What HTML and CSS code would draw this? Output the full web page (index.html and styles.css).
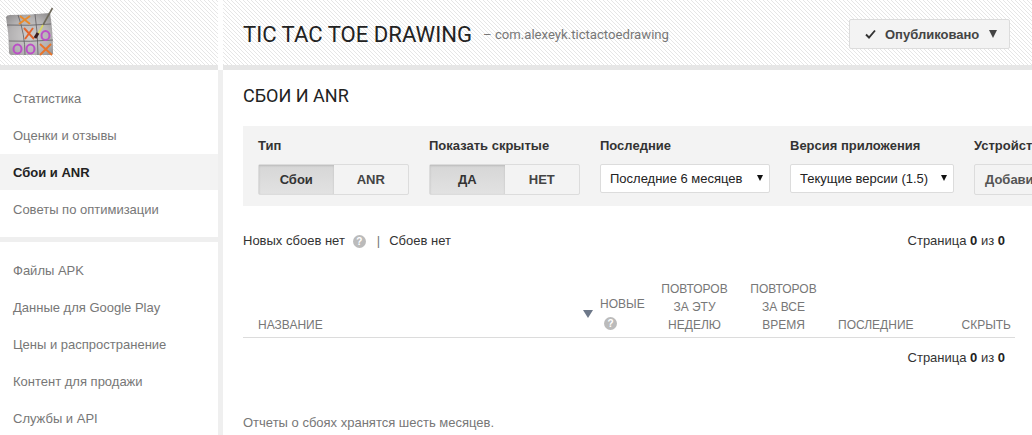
FILE: index.html
```html
<!DOCTYPE html>
<html lang="ru">
<head>
<meta charset="utf-8">
<title>Сбои и ANR</title>
<link rel="stylesheet" href="styles.css">
</head>
<body>
<div class="page">
  <aside class="side">
    <div class="logo-bar stripes">
      <svg class="logo" width="54" height="57" viewBox="0 0 54 57">
        <defs>
          <radialGradient id="tile" cx=".5" cy=".55" r=".7">
            <stop offset="0" stop-color="#cfcdcd"/>
            <stop offset=".6" stop-color="#b4b2b3"/>
            <stop offset="1" stop-color="#8c8a8b"/>
          </radialGradient>
          <filter id="soft" x="-5%" y="-5%" width="110%" height="110%"><feGaussianBlur stdDeviation=".3"/></filter>
        </defs>
        <g filter="url(#soft)">
          <path d="M6 17 Q7 15 10 15 Q30 15 50 13 Q53 30 53 53 Q53 55 50 55 L12 55 Q9 55 9 52 Q9 34 6 17Z" fill="url(#tile)"/>
          <g fill="none" stroke="#5f5d61" stroke-width=".8">
            <path d="M7 25 Q30 26 51 24"/>
            <path d="M9 41 Q30 42 53 40"/>
            <path d="M18 15 Q25 34 25 55"/>
            <path d="M35 14 Q38 34 38 55"/>
          </g>
          <g fill="none" stroke-width="1.9">
            <path d="M20 16 L30 24M30 16 L19 24" stroke="#e98a2c"/>
            <path d="M24 28 L34 39M33 28 L25 39" stroke="#e3642a"/>
            <path d="M40 44 L52 55M51 44 L40 55" stroke="#e8742b"/>
          </g>
          <g fill="none" stroke="#bb4fc6" stroke-width="2">
            <ellipse cx="45.500" cy="35.500" rx="4" ry="4.500"/>
            <ellipse cx="17.500" cy="49" rx="4" ry="4.500"/>
            <ellipse cx="30.500" cy="49" rx="4" ry="4.500"/>
          </g>
          <path d="M52.500 8 L43 25" stroke="#6e6a5c" stroke-width="1.600"/>
          <path d="M43 25 L38 34" stroke="#d8d860" stroke-width="1.600"/>
          <path d="M38 33 L35 38" stroke="#3a1c1c" stroke-width="3"/>
        </g>
      </svg>
    </div>
    <nav class="nav-group">
      <a class="nav-item">Статистика</a>
      <a class="nav-item">Оценки и отзывы</a>
      <a class="nav-item active">Сбои и ANR</a>
      <a class="nav-item">Советы по оптимизации</a>
    </nav>
    <nav class="nav-group">
      <a class="nav-item">Файлы APK</a>
      <a class="nav-item">Данные для Google Play</a>
      <a class="nav-item">Цены и распространение</a>
      <a class="nav-item">Контент для продажи</a>
      <a class="nav-item">Службы и API</a>
    </nav>
  </aside>
  <main class="main">
    <header class="top stripes">
      <h1 class="app-name">TIC TAC TOE DRAWING</h1>
      <span class="package">– com.alexeyk.tictactoedrawing</span>
      <button class="publish">
        <svg class="check" width="11" height="10" viewBox="0 0 11 10"><path d="M1 5.500 L4 8.500 L10 1.500" fill="none" stroke="#333" stroke-width="1.900"/></svg>
        <span>Опубликовано</span>
        <span class="caret"></span>
      </button>
    </header>
    <section class="content">
      <h2 class="page-title">СБОИ И ANR</h2>
      <div class="filters">
        <div class="filter">
          <div class="label">Тип</div>
          <div class="toggle">
            <span class="seg on">Сбои</span><span class="seg">ANR</span>
          </div>
        </div>
        <div class="filter">
          <div class="label">Показать скрытые</div>
          <div class="toggle low">
            <span class="seg on">ДА</span><span class="seg">НЕТ</span>
          </div>
        </div>
        <div class="filter">
          <div class="label">Последние</div>
          <div class="select w170">Последние 6 месяцев<span class="sel-caret"></span></div>
        </div>
        <div class="filter">
          <div class="label">Версия приложения</div>
          <div class="select w164">Текущие версии (1.5)<span class="sel-caret"></span></div>
        </div>
        <div class="filter">
          <div class="label">Устройства</div>
          <div class="add">Добавить устройство</div>
        </div>
      </div>
      <div class="summary">
        <div class="summary-left">
          <span>Новых сбоев нет</span>
          <span class="help">?</span>
          <span class="sep">|</span>
          <span>Сбоев нет</span>
        </div>
        <div class="pager">Страница <b>0</b> из <b>0</b></div>
      </div>
      <div class="thead">
        <div class="th name">НАЗВАНИЕ</div>
        <div class="th sort"><span class="sort-caret"></span></div>
        <div class="th news">НОВЫЕ<span class="help small">?</span></div>
        <div class="th center c1">ПОВТОРОВ<br>ЗА ЭТУ<br>НЕДЕЛЮ</div>
        <div class="th center c2">ПОВТОРОВ<br>ЗА ВСЕ<br>ВРЕМЯ</div>
        <div class="th last">ПОСЛЕДНИЕ</div>
        <div class="th hide">СКРЫТЬ</div>
      </div>
      <div class="pager bottom">Страница <b>0</b> из <b>0</b></div>
      <p class="note">Отчеты о сбоях хранятся шесть месяцев.</p>
    </section>
  </main>
</div>
</body>
</html>
```
FILE: styles.css
```css
* { box-sizing: border-box; }
html, body { margin: 0; height: 100%; overflow: hidden; background: #fff; }
body { font: 13px/18px "Liberation Sans", Arial, sans-serif; color: #333; }
.page { display: grid; grid-template-columns: 218px 809px; column-gap: 5px; width: 1032px; height: 435px; overflow: hidden; background: linear-gradient(#fff 0 70px, #efefef 70px); }
.stripes {
  background-color: #fff;
  background-image: repeating-linear-gradient(45deg, #e6e6e6 0 1px, #fff 1px 2.83px);
  border-bottom: 5px solid #e6e6e6;
  height: 70px;
}
.side { background: #efefef; height: 435px; overflow: hidden; }
.logo-bar { display: block; }
.logo { display: block; }
.nav-group { display: block; background: #fff; padding: 10px 0 9px; margin-bottom: 5px; }
.nav-item { display: flex; align-items: center; height: 37px; padding: 0 13px; color: #777; }
.nav-item.active { height: 36px; margin-bottom: 1px; padding-top: 1px; background: #f3f3f3; color: #222; font-weight: bold; }

.main { background: #fff; min-width: 0; height: 435px; overflow: hidden; }
.top { display: flex; align-items: center; padding: 3px 22px 0 20px; }
.app-name { margin: 0; font: 400 22.1px/30px Roboto, sans-serif; color: #222; }
.package { margin-left: 11px; padding-top: 2px; font: 13.15px/18px Roboto, sans-serif; color: #777; }
.publish {
  display: flex; align-items: center; margin-left: auto; width: 161px; height: 30px; padding: 0 0 0 15px;
  background: #f3f3f3; border: 1px solid #dcdcdc; border-radius: 2px;
  font: bold 13px "Liberation Sans", Arial, sans-serif; color: #444;
}
.check { margin-right: 9px; }
.caret { margin-left: 10px; border: 4.500px solid transparent; border-top: 8px solid #444; border-bottom: 0; }

.content { padding: 0 17px 0 20px; }
.page-title { margin: 15px 0 19px; font: 400 18px/22px Roboto, sans-serif; color: #222; }
.filters { display: flex; gap: 20px; width: 850px; height: 80px; padding: 11px 15px 0; background: #f3f3f3; }
.filter { flex: none; }
.label { font-weight: bold; line-height: 18px; color: #333; margin-bottom: 9px; }
.toggle { display: flex; width: 151px; height: 31px; background: #f3f3f3; border: 1px solid #dcdcdc; border-radius: 2px; font-weight: bold; color: #444; }
.toggle.low { margin-top: 1px; }
.seg { flex: 1; display: flex; align-items: center; justify-content: center; }
.seg.on { background: linear-gradient(#d6d6d6, #e2e2e2); box-shadow: inset 0 1px 2px #bbb; color: #333; }
.select { display: flex; align-items: center; margin-top: 2px; height: 29px; padding-left: 9px; position: relative; background: #fff; border: 1px solid #dcdcdc; border-radius: 2px; color: #222; white-space: nowrap; }
.w170 { width: 170px; }
.w164 { width: 164px; }
.sel-caret { position: absolute; right: 6px; top: 10px; border: 3px solid transparent; border-top: 6px solid #111; border-bottom: 0; }
.add { display: flex; align-items: center; width: 170px; height: 31px; padding-left: 10px; background: #f3f3f3; border: 1px solid #dcdcdc; border-radius: 2px; font-weight: bold; color: #555; white-space: nowrap; }

.summary { display: flex; justify-content: space-between; align-items: center; margin-top: 26px; height: 18px; padding-right: 10px; color: #333; }
.summary-left { display: flex; align-items: center; }
.help { display: inline-block; width: 13px; height: 13px; border-radius: 50%; background: #bbb; color: #fff; font: bold 10px/13px "Liberation Sans", Arial, sans-serif; text-align: center; }
.summary-left .help { margin-left: 8px; }
.sep { margin: 0 9px 0 11px; color: #777; }
.pager b { color: #222; }

.thead { display: grid; grid-template-columns: 340px 17px 58px 77px 101px 100px 79px; align-items: end; margin-top: 30px; height: 58px; padding-bottom: 3px; border-bottom: 1px solid #dcdcdc; color: #777; font-size: 12px; line-height: 18px; }
.th { min-width: 0; }
.name { padding-left: 15px; }
.sort { align-self: start; padding-top: 30px; }
.sort-caret { display: block; width: 0; border: 5.500px solid transparent; border-top: 8px solid #6d7889; border-bottom: 0; }
.news { display: flex; flex-direction: column; align-items: flex-start; gap: 4px; padding-bottom: 4px; }
.news .small { margin-left: 4px; }
.center { text-align: center; }
.c1 { margin-left: -4px; }
.c2 { margin-left: -4px; }
.last { white-space: nowrap; padding-left: 2px; }
.hide { text-align: right; padding-right: 4px; }
.pager.bottom { margin-top: 11px; padding-right: 10px; text-align: right; }
.note { margin: 47px 0 0; color: #777; }
```
